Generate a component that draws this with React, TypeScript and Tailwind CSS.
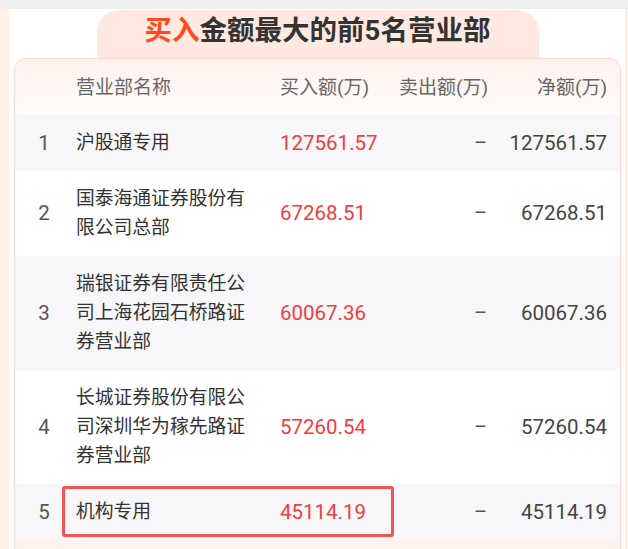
const rows = [
  { no: 1, name: "沪股通专用", buy: "127561.57", net: "127561.57" },
  { no: 2, name: "国泰海通证券股份有限公司总部", buy: "67268.51", net: "67268.51" },
  { no: 3, name: "瑞银证券有限责任公司上海花园石桥路证券营业部", buy: "60067.36", net: "60067.36" },
  { no: 4, name: "长城证券股份有限公司深圳华为稼先路证券营业部", buy: "57260.54", net: "57260.54" },
  { no: 5, name: "机构专用", buy: "45114.19", net: "45114.19" },
];

const font = { fontFamily: 'Roboto, "Noto Sans CJK SC", sans-serif' };

export default function App() {
  return (
    <div className="h-[549px] w-[628px] overflow-hidden bg-white" style={font}>
      {/* top strip */}
      <div className="h-[9px] bg-[#efefef]" />

      <div className="flex">
        <div className="w-[9px] shrink-0 self-stretch bg-[#fff0e8]" />
        <div className="w-[5px] shrink-0" />

        <div className="w-[607px] shrink-0">
          {/* title tab */}
          <div className="mx-auto mt-px h-[48px] w-[442px] rounded-t-[22px] bg-[#ffe9e0] text-center text-[27.5px] font-bold leading-[41px] text-[#333]">
            <span className="text-[#ff4a1c]">买入</span>金额最大的前5名营业部
          </div>

          {/* table card */}
          <div className="overflow-hidden rounded-t-[12px] border border-[#ffd9d4] bg-[#fff1ec] pb-[30px]">
            <div className="grid grid-cols-[61px_204px_118px_90px_119px_13px] bg-gradient-to-b from-[#fff1ed] to-[#fffdfc] py-[13.5px] text-[19px] leading-[29px] text-[#666]">
              <div />
              <div>营业部名称</div>
              <div>买入额(万)</div>
              <div className="text-right">卖出额(万)</div>
              <div className="text-right">净额(万)</div>
              <div />
            </div>

            {rows.map((r, i) => (
              <div
                key={r.no}
                className={`relative grid grid-cols-[61px_204px_118px_90px_119px_13px] items-center py-[13.5px] leading-[29px] text-[#444] ${
                  i % 2 === 0 ? "bg-[#f7f7f9]" : "bg-white"
                }`}
              >
                <div className="pr-[3px] text-center text-[20.5px] text-[#555]">{r.no}</div>
                <div className="pr-[32px] text-[18.8px] text-[#333]">{r.name}</div>
                <div className="text-[20.5px] text-[#f23d3d]">{r.buy}</div>
                <div className="pr-px text-right text-[20px] text-[#555]">–</div>
                <div className="text-right text-[20.5px]">{r.net}</div>
                <div />
                {r.no === 5 && (
                  <div className="absolute top-[2px] left-[47px] h-[51px] w-[332px] rounded-[3px] border-[3px] border-[#f55353]" />
                )}
              </div>
            ))}
          </div>
        </div>

        <div className="w-[5px] shrink-0" />
        <div className="w-px shrink-0 self-stretch bg-[#fbe2dd]" />
      </div>
    </div>
  );
}
